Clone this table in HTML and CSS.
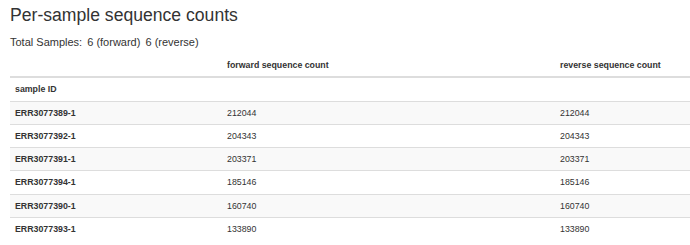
FILE: index.html
```html
<!DOCTYPE html>
<html>
<head>
<meta charset="utf-8">
<link rel="stylesheet" href="styles.css">
</head>
<body>
<div class="page">
  <h1 class="title">Per-sample sequence counts</h1>
  <p class="totals">Total Samples: <span class="count">6 (forward)</span> <span class="count">6 (reverse)</span></p>
  <table class="counts">
    <colgroup>
      <col class="c-id">
      <col class="c-fwd">
      <col class="c-rev">
    </colgroup>
    <thead>
      <tr class="head-cols">
        <th></th>
        <th>forward sequence count</th>
        <th>reverse sequence count</th>
      </tr>
      <tr class="head-index">
        <th>sample ID</th>
        <th></th>
        <th></th>
      </tr>
    </thead>
    <tbody>
      <tr><th>ERR3077389-1</th><td>212044</td><td>212044</td></tr>
      <tr><th>ERR3077392-1</th><td>204343</td><td>204343</td></tr>
      <tr><th>ERR3077391-1</th><td>203371</td><td>203371</td></tr>
      <tr><th>ERR3077394-1</th><td>185146</td><td>185146</td></tr>
      <tr><th>ERR3077390-1</th><td>160740</td><td>160740</td></tr>
      <tr><th>ERR3077393-1</th><td>133890</td><td>133890</td></tr>
    </tbody>
  </table>
</div>
</body>
</html>
```

FILE: styles.css
```css
html, body {
  margin: 0;
  padding: 0;
  background: #fff;
}

body {
  font-family: "Liberation Sans", Arial, Helvetica, sans-serif;
  color: #333;
}

.page {
  padding-left: 10px;
}

.title {
  margin: 5px 0 0 0;
  font-size: 17.6px;
  line-height: 20px;
  font-weight: normal;
  color: #333;
}

.totals {
  margin: 10px 0 0 0;
  font-size: 11px;
  line-height: 15px;
}

.totals .count {
  margin-left: 2px;
}

.counts {
  margin-top: 4px;
  width: 680px;
  border-collapse: collapse;
  border-spacing: 0;
  font-size: 8.8px;
  table-layout: fixed;
}

.c-id { width: 212px; }
.c-fwd { width: 333px; }
.c-rev { width: 135px; }

.counts th,
.counts td {
  padding: 5px;
  line-height: 12.25px;
  text-align: left;
  vertical-align: top;
  border-top: 1px solid #ddd;
}

.counts th {
  font-weight: bold;
}

.counts td {
  font-weight: normal;
}

.counts .head-cols th {
  border-top: 0;
  border-bottom: 2px solid #ddd;
}

.counts tbody tr:nth-child(odd) {
  background: #f9f9f9;
}
```
